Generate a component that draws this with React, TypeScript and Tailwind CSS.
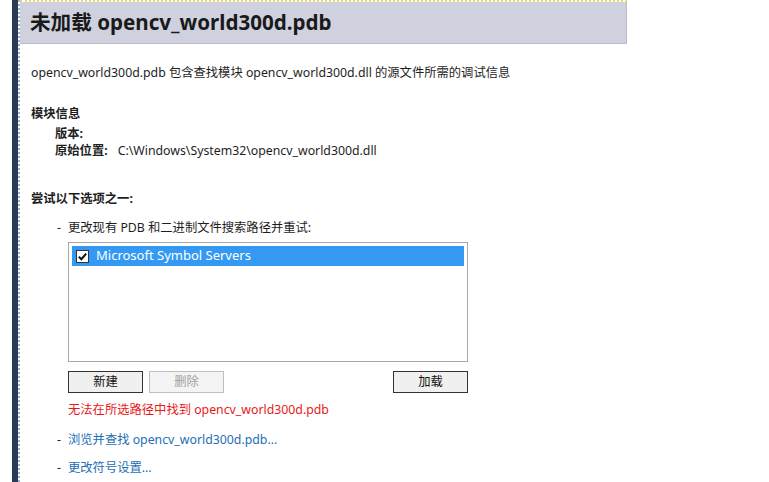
export default function App() {
  const font = { fontFamily: '"Noto Sans", "Noto Sans CJK SC", sans-serif' };
  return (
    <div className="flex h-[482px] w-[769px] overflow-hidden bg-white text-[12.3px] text-[#1e1e1e]" style={font}>
      <div className="w-[12px] shrink-0 bg-white" />
      <div className="w-[6px] shrink-0 bg-[#2b3a55]" />
      <div className="w-[2px] shrink-0 border-l-2 border-dotted border-[#9fb2d4]" />
      <div className="flex w-[607px] shrink-0 flex-col">
        <div className="h-[2px] border-t-2 border-dotted border-[#e8d878]" />
        <div className="flex h-[42px] items-center border-b border-r border-[#b9bccb] bg-[#cfd2de] pl-[10px]">
          <h1 className="text-[20.6px] font-bold leading-none text-[#1a1a1a]">未加载 opencv_world300d.pdb</h1>
        </div>
        <div className="flex flex-col pl-[11px]">
          <p className="mt-[21px] leading-[16px]">
            opencv_world300d.pdb 包含查找模块 opencv_world300d.dll 的源文件所需的调试信息
          </p>
          <p className="mt-[25px] font-bold leading-[16px]">模块信息</p>
          <div className="mt-[3px] flex flex-col pl-[24px]">
            <p className="font-bold leading-[17px]">版本:</p>
            <p className="leading-[17px]">
              <span className="font-bold">原始位置:</span>
              <span className="ml-[10px]">C:\Windows\System32\opencv_world300d.dll</span>
            </p>
          </div>
          <p className="mt-[32px] font-bold leading-[16px]">尝试以下选项之一:</p>
          <div className="mt-[13px] flex leading-[16px]">
            <span className="w-[37px] pl-[26px]">-</span>
            <span>更改现有 PDB 和二进制文件搜索路径并重试:</span>
          </div>
          <div className="ml-[37px] flex w-[400px] flex-col">
            <div className="mt-[6px] h-[120px] border border-[#a8a8a8] bg-white p-[3px]">
              <div className="flex h-[20px] items-center bg-[#3399f3] pl-[4px]">
                <div className="flex h-[13px] w-[13px] items-center justify-center border border-[#333] bg-white">
                  <svg viewBox="0 0 12 12" className="h-[11px] w-[11px]">
                    <path d="M2 6.2 L4.8 9 L10 2.8" fill="none" stroke="#111" strokeWidth="2.2" />
                  </svg>
                </div>
                <span className="ml-[7px] text-[13px] text-white">Microsoft Symbol Servers</span>
              </div>
            </div>
            <div className="mt-[9px] flex h-[22px] items-stretch">
              <div className="flex w-[75px] items-center justify-center border border-[#333] bg-[#f0f0f0] text-[#111]">新建</div>
              <div className="ml-[6px] flex w-[75px] items-center justify-center border border-[#bfbfbf] bg-[#f4f4f4] text-[#a0a0a0]">删除</div>
              <div className="ml-auto flex w-[75px] items-center justify-center border border-[#333] bg-[#f0f0f0] text-[#111]">加载</div>
            </div>
            <p className="mt-[9px] leading-[16px] text-[#e81919]">无法在所选路径中找到 opencv_world300d.pdb</p>
          </div>
          <div className="mt-[14px] flex leading-[16px]">
            <span className="w-[37px] pl-[26px]">-</span>
            <span className="text-[#1e6eb4]">浏览并查找 opencv_world300d.pdb...</span>
          </div>
          <div className="mt-[12px] flex leading-[16px]">
            <span className="w-[37px] pl-[26px]">-</span>
            <span className="text-[#1e6eb4]">更改符号设置...</span>
          </div>
        </div>
      </div>
    </div>
  );
}
